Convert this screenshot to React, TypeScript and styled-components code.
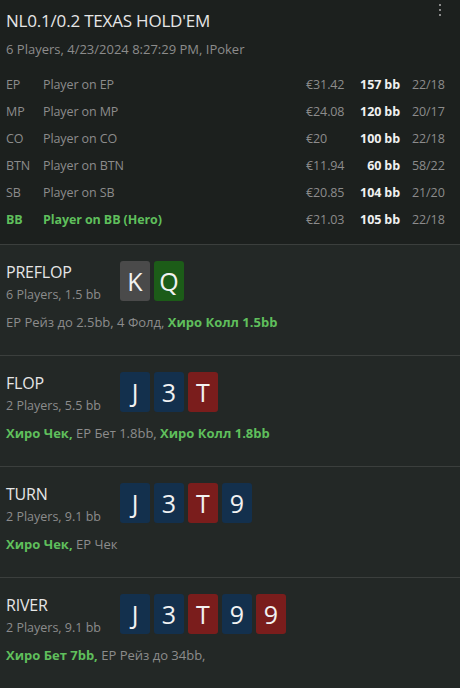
import React from 'react';
import styled, { createGlobalStyle } from 'styled-components';

const GlobalStyle = createGlobalStyle`
  html, body {
    margin: 0;
    padding: 0;
    background: #232826;
  }
  body {
    font-family: "Open Sans", "Noto Sans", sans-serif;
    color: #8c8c8c;
  }
`;

const Page = styled.div`
  position: relative;
  width: 460px;
  height: 688px;
  overflow: hidden;
  background: #232826;
`;

const Header = styled.div`
  background: #1c201e;
  padding: 9px 0 11px 6px;
  border-bottom: 1px solid #3b3f3d;
`;

const Title = styled.div`
  font-size: 17px;
  line-height: 24px;
  color: #e6e6e6;
  letter-spacing: -0.2px;
`;

const Sub = styled.div`
  font-size: 13px;
  line-height: 18px;
  margin-top: 7px;
  color: #8c8c8c;
`;

const Menu = styled.div`
  position: absolute;
  top: 2px;
  right: 18px;
`;

const Table = styled.div`
  display: grid;
  grid-template-columns: 37px 1fr 52px 42px 60px;
  grid-auto-rows: 27px;
  margin-top: 13px;
`;

const Cell = styled.div<{ $hero?: boolean; $bold?: boolean; $right?: boolean; $pad?: boolean }>`
  font-size: 12.5px;
  line-height: 27px;
  letter-spacing: -0.1px;
  white-space: nowrap;
  color: ${(p) => (p.$hero ? '#5fbf5c' : p.$bold ? '#f0f0f0' : '#8c8c8c')};
  font-weight: ${(p) => (p.$hero || p.$bold ? 700 : 400)};
  text-align: ${(p) => (p.$right ? 'right' : 'left')};
  padding-left: ${(p) => (p.$pad ? '12px' : '0')};
`;

const Section = styled.div<{ $last?: boolean }>`
  padding: 16px 0 0 6px;
  border-bottom: ${(p) => (p.$last ? 'none' : '1px solid #3b3f3d')};
  box-sizing: border-box;
  height: ${(p) => (p.$last ? '110px' : '111px')};
`;

const StreetRow = styled.div`
  display: flex;
  align-items: flex-start;
`;

const StreetInfo = styled.div`
  width: 114px;
`;

const StreetName = styled.div`
  font-size: 16px;
  line-height: 22px;
  color: #e6e6e6;
  letter-spacing: -0.2px;
`;

const StreetSub = styled.div`
  font-size: 12.5px;
  line-height: 18px;
  margin-top: 3px;
`;

const Cards = styled.div`
  display: flex;
  gap: 4px;
`;

const Card = styled.div<{ $bg: string }>`
  width: 30px;
  height: 40px;
  border-radius: 3px;
  background: ${(p) => p.$bg};
  color: #f2f2f2;
  font-size: 25px;
  line-height: 40px;
  text-align: center;
`;

const Actions = styled.div`
  font-size: 13px;
  line-height: 18px;
  margin-top: 9px;
  white-space: nowrap;
`;

const Hero = styled.span`
  color: #5fbf5c;
  font-weight: 700;
`;

const suitColors: Record<string, string> = {
  grey: '#4a4a4a',
  green: '#1c5c18',
  blue: '#13304d',
  red: '#7a1d1c',
};

const players = [
  { pos: 'EP', name: 'Player on EP', money: '€31.42', bb: '157 bb', ratio: '22/18' },
  { pos: 'MP', name: 'Player on MP', money: '€24.08', bb: '120 bb', ratio: '20/17' },
  { pos: 'CO', name: 'Player on CO', money: '€20', bb: '100 bb', ratio: '22/18' },
  { pos: 'BTN', name: 'Player on BTN', money: '€11.94', bb: '60 bb', ratio: '58/22' },
  { pos: 'SB', name: 'Player on SB', money: '€20.85', bb: '104 bb', ratio: '21/20' },
  { pos: 'BB', name: 'Player on BB (Hero)', money: '€21.03', bb: '105 bb', ratio: '22/18', hero: true },
];

type Street = {
  name: string;
  sub: string;
  cards: Array<[string, string]>;
  actions: React.ReactNode;
};

const board: Array<[string, string]> = [
  ['J', 'blue'],
  ['3', 'blue'],
  ['T', 'red'],
  ['9', 'blue'],
  ['9', 'red'],
];

const streets: Street[] = [
  {
    name: 'PREFLOP',
    sub: '6 Players, 1.5 bb',
    cards: [
      ['K', 'grey'],
      ['Q', 'green'],
    ],
    actions: (
      <>
        EP Рейз до 2.5bb, 4 Фолд, <Hero>Хиро Колл 1.5bb</Hero>
      </>
    ),
  },
  {
    name: 'FLOP',
    sub: '2 Players, 5.5 bb',
    cards: board.slice(0, 3),
    actions: (
      <>
        <Hero>Хиро Чек,</Hero> EP Бет 1.8bb, <Hero>Хиро Колл 1.8bb</Hero>
      </>
    ),
  },
  {
    name: 'TURN',
    sub: '2 Players, 9.1 bb',
    cards: board.slice(0, 4),
    actions: (
      <>
        <Hero>Хиро Чек,</Hero> EP Чек
      </>
    ),
  },
  {
    name: 'RIVER',
    sub: '2 Players, 9.1 bb',
    cards: board,
    actions: (
      <>
        <Hero>Хиро Бет 7bb,</Hero> EP Рейз до 34bb,
      </>
    ),
  },
];

function Dots() {
  return (
    <svg width="4" height="16" viewBox="0 0 4 16">
      <rect x="1" y="1" width="2" height="2" fill="#8a8a8a" />
      <rect x="1" y="6" width="2" height="2" fill="#8a8a8a" />
      <rect x="1" y="11" width="2" height="2" fill="#8a8a8a" />
    </svg>
  );
}

export default function App() {
  return (
    <Page>
      <GlobalStyle />
      <Menu>
        <Dots />
      </Menu>
      <Header>
        <Title>NL0.1/0.2 TEXAS HOLD'EM</Title>
        <Sub>6 Players, 4/23/2024 8:27:29 PM, IPoker</Sub>
        <Table>
          {players.map((p) => (
            <React.Fragment key={p.pos}>
              <Cell $hero={p.hero}>{p.pos}</Cell>
              <Cell $hero={p.hero}>{p.name}</Cell>
              <Cell>{p.money}</Cell>
              <Cell $bold $right>{p.bb}</Cell>
              <Cell $pad>{p.ratio}</Cell>
            </React.Fragment>
          ))}
        </Table>
      </Header>
      {streets.map((s, i) => (
        <Section key={s.name} $last={i === streets.length - 1}>
          <StreetRow>
            <StreetInfo>
              <StreetName>{s.name}</StreetName>
              <StreetSub>{s.sub}</StreetSub>
            </StreetInfo>
            <Cards>
              {s.cards.map(([rank, suit], idx) => (
                <Card key={idx} $bg={suitColors[suit]}>{rank}</Card>
              ))}
            </Cards>
          </StreetRow>
          <Actions>{s.actions}</Actions>
        </Section>
      ))}
    </Page>
  );
}
